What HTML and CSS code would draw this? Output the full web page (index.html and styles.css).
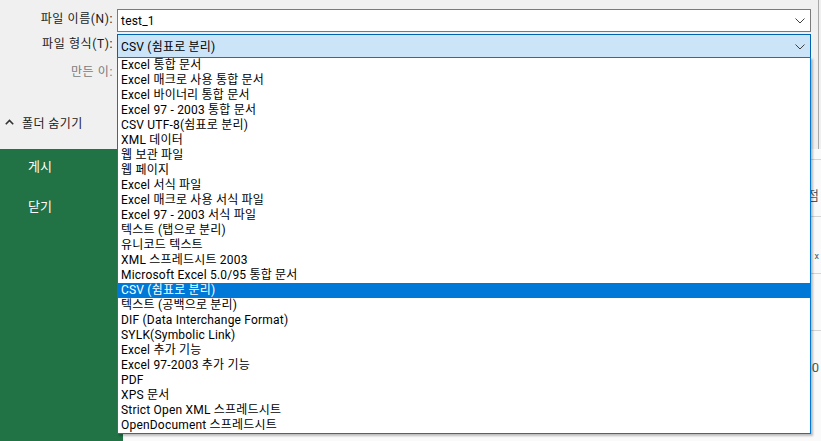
FILE: index.html
```html
<!DOCTYPE html>
<html lang="ko">
<head>
<meta charset="utf-8">
<title>다른 이름으로 저장</title>
<link rel="stylesheet" href="styles.css">
</head>
<body>
<div class="screen">
  <div class="dialog">
    <div class="form">
      <div class="label">파일 이름(N):</div>
      <div class="field input"><span class="value">test_1</span><svg class="chev" width="10" height="6" viewBox="0 0 10 6"><path d="M0.5 0.5 L5 5 L9.5 0.5" fill="none" stroke="#404040" stroke-width="1"/></svg></div>
      <div class="label">파일 형식(T):</div>
      <div class="field select"><span class="value">CSV (쉼표로 분리)</span><svg class="chev" width="10" height="6" viewBox="0 0 10 6"><path d="M0.5 0.5 L5 5 L9.5 0.5" fill="none" stroke="#404040" stroke-width="1"/></svg></div>
      <div class="label muted tall">만든 이:</div>
      <div class="field blank tall"></div>
    </div>
    <div class="folder">
      <svg class="up" width="9" height="6" viewBox="0 0 9 6"><path d="M0.8 5.2 L4.5 1.5 L8.2 5.2" fill="none" stroke="#333" stroke-width="1.6"/></svg>
      <span>폴더 숨기기</span>
    </div>
  </div>
  <div class="below">
    <div class="sidebar">
      <div class="nav">게시</div>
      <div class="nav">닫기</div>
    </div>
    <div class="content">
      <div class="row first"></div>
      <div class="row"><span class="cut">점</span></div>
      <div class="row"><span class="cut small">x</span></div>
      <div class="row"></div>
      <div class="row"><span class="cut">)0</span></div>
    </div>
  </div>
  <ul class="list">
    <li>Excel 통합 문서</li>
    <li>Excel 매크로 사용 통합 문서</li>
    <li>Excel 바이너리 통합 문서</li>
    <li>Excel 97 - 2003 통합 문서</li>
    <li>CSV UTF-8(쉼표로 분리)</li>
    <li>XML 데이터</li>
    <li>웹 보관 파일</li>
    <li>웹 페이지</li>
    <li>Excel 서식 파일</li>
    <li>Excel 매크로 사용 서식 파일</li>
    <li>Excel 97 - 2003 서식 파일</li>
    <li>텍스트 (탭으로 분리)</li>
    <li>유니코드 텍스트</li>
    <li>XML 스프레드시트 2003</li>
    <li>Microsoft Excel 5.0/95 통합 문서</li>
    <li class="sel">CSV (쉼표로 분리)</li>
    <li>텍스트 (공백으로 분리)</li>
    <li>DIF (Data Interchange Format)</li>
    <li>SYLK(Symbolic Link)</li>
    <li>Excel 추가 기능</li>
    <li>Excel 97-2003 추가 기능</li>
    <li>PDF</li>
    <li>XPS 문서</li>
    <li>Strict Open XML 스프레드시트</li>
    <li>OpenDocument 스프레드시트</li>
  </ul>
</div>
</body>
</html>
```

FILE: styles.css
```css
* { box-sizing: border-box; }
html, body { margin: 0; padding: 0; }
body {
  width: 821px;
  height: 441px;
  overflow: hidden;
  font-family: Roboto, "Noto Sans CJK KR", sans-serif;
  font-size: 12px;
  color: #1a1a1a;
  background: #f0f0f0;
}
.screen {
  position: relative;
  width: 821px;
  height: 441px;
  overflow: hidden;
}
.dialog {
  height: 149px;
  background: #f0f0f0;
  padding-top: 9px;
  border-right: 1px solid #a8a8a8;
  width: 819px;
}
.form {
  display: grid;
  grid-template-columns: 113px 694px;
  grid-template-rows: 23px 23px 28px;
  column-gap: 4px;
  row-gap: 2px;
}
.label {
  text-align: right;
  line-height: 21px;
  white-space: nowrap;
  letter-spacing: 0.6px;
}
.label.muted { color: #7a7a7a; }
.label.tall { line-height: 26px; }
.field {
  display: flex;
  align-items: center;
  justify-content: space-between;
  padding: 0 5px 0 3px;
  border: 1px solid #7a7a7a;
  background: #fff;
}
.field .value { line-height: 20px; color: #000; letter-spacing: 0.2px; }
.select {
  background: #cce4f7;
  border-color: #0063b1;
  margin-bottom: -2px;
}
.blank { border: none; background: transparent; }
.chev { flex: none; }
.folder {
  display: flex;
  align-items: center;
  gap: 8px;
  padding-left: 5px;
  margin-top: 27px;
  height: 16px;
  letter-spacing: 0.4px;
}
.up { flex: none; }
.below {
  display: flex;
  height: 292px;
}
.sidebar {
  width: 123px;
  flex: none;
  background: #217346;
  color: #fff;
  padding-top: 8px;
  font-size: 13px;
}
.nav {
  padding-left: 28px;
  line-height: 20px;
  margin-bottom: 20px;
}
.content {
  flex: 1;
  background: #fafafa;
  padding-top: 10px;
}
.row {
  height: 57px;
  border-top: 1px solid #d4d4d4;
  display: flex;
  align-items: flex-end;
  justify-content: flex-end;
  padding: 0 2px 12px 0;
  color: #555;
  font-size: 13px;
}
.row.first { height: 0; border: none; padding: 0; }
.row .small { font-size: 9px; }
.list {
  position: absolute;
  left: 117px;
  top: 57px;
  width: 694px;
  margin: 0;
  padding: 0;
  list-style: none;
  background: #fff;
  border: 1px solid #0078d7;
  box-shadow: 2px 2px 2px rgba(0, 0, 0, 0.25);
  color: #000;
}
.list li {
  height: 15px;
  line-height: 15px;
  padding-left: 3px;
  white-space: nowrap;
  letter-spacing: 0.2px;
}
.list li.sel {
  background: #0078d7;
  color: #fff;
}
```
